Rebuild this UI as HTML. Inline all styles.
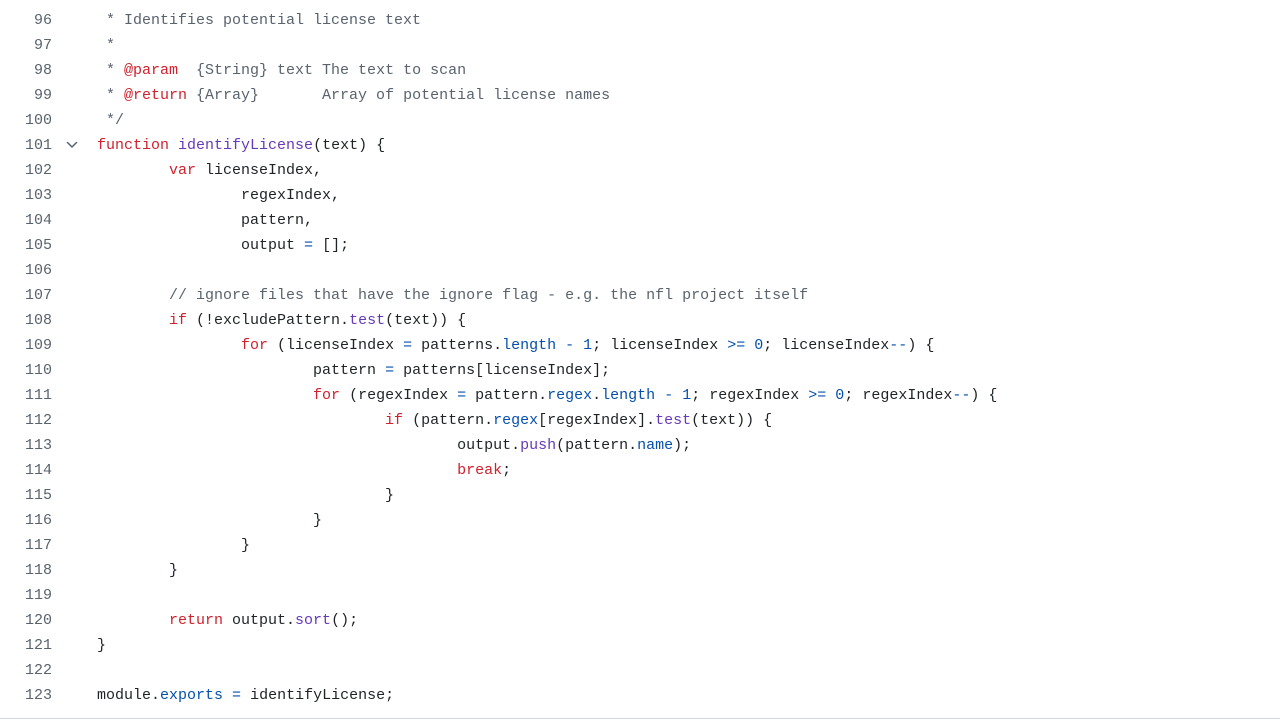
<!DOCTYPE html>
<html><head><meta charset="utf-8"><style>
html,body{margin:0;padding:0;background:#fff;width:1280px;height:721px;overflow:hidden;position:relative}
.wrap{position:absolute;left:0;top:-17.5px;font-family:"Liberation Mono",monospace;font-size:15px;line-height:25px;white-space:pre;tab-size:8;-moz-tab-size:8}
.ln{position:absolute;left:0;top:0;width:52px;text-align:right;color:#59636e}
.code{position:absolute;left:97px;top:0;color:#1f2328}
.k{color:#cf222e}.f{color:#6639ba}.p{color:#0550ae}.c{color:#59636e}
.bot{position:absolute;left:0;right:0;top:718px;height:1px;background:#d1d9e0}
.chev{position:absolute;left:66px;top:139px}
</style></head><body>
<div class="wrap"><div class="ln">95
96
97
98
99
100
101
102
103
104
105
106
107
108
109
110
111
112
113
114
115
116
117
118
119
120
121
122
123</div><div class="code"><span class="c">/**
 * Identifies potential license text
 *
 * <span class="k">@param</span>  {String} text The text to scan
 * <span class="k">@return</span> {Array}       Array of potential license names
 */</span>
<span class="k">function</span> <span class="f">identifyLicense</span>(text) {
	<span class="k">var</span> licenseIndex,
		regexIndex,
		pattern,
		output <span class="p">=</span> [];

	<span class="c">// ignore files that have the ignore flag - e.g. the nfl project itself</span>
	<span class="k">if</span> (!excludePattern.<span class="f">test</span>(text)) {
		<span class="k">for</span> (licenseIndex <span class="p">=</span> patterns.<span class="p">length</span> <span class="p">-</span> <span class="p">1</span>; licenseIndex <span class="p">&gt;=</span> <span class="p">0</span>; licenseIndex<span class="p">--</span>) {
			pattern <span class="p">=</span> patterns[licenseIndex];
			<span class="k">for</span> (regexIndex <span class="p">=</span> pattern.<span class="p">regex</span>.<span class="p">length</span> <span class="p">-</span> <span class="p">1</span>; regexIndex <span class="p">&gt;=</span> <span class="p">0</span>; regexIndex<span class="p">--</span>) {
				<span class="k">if</span> (pattern.<span class="p">regex</span>[regexIndex].<span class="f">test</span>(text)) {
					output.<span class="f">push</span>(pattern.<span class="p">name</span>);
					<span class="k">break</span>;
				}
			}
		}
	}

	<span class="k">return</span> output.<span class="f">sort</span>();
}

module.<span class="p">exports</span> <span class="p">=</span> identifyLicense;</div></div>
<svg class="chev" width="12" height="12" viewBox="0 0 12 12"><path d="M1.5 3.5 L6 8 L10.5 3.5" fill="none" stroke="#59636e" stroke-width="1.5" stroke-linecap="round" stroke-linejoin="round"/></svg>
<div class="bot"></div>
</body></html>
